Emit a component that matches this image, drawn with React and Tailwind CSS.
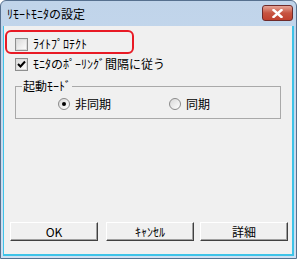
import { useState } from "react";

const font = { fontFamily: '"Noto Sans CJK JP", "Liberation Sans", sans-serif' };

const CheckBox = ({ checked, label }) => (
    <label className="flex items-center gap-[5px] h-[16px]">
        <span className="w-[13px] h-[13px] border border-[#8e8f8f] bg-white flex items-center justify-center">
            <span className="w-[11px] h-[11px] border border-[#dcdcdc] bg-gradient-to-br from-[#dcdcdc] to-[#fbfbfb] flex items-center justify-center">
                {checked && (
                    <svg width="9" height="9" viewBox="0 0 9 9">
                        <path d="M1 4 L3.5 6.5 L8 1.5" stroke="#000" strokeWidth="2" fill="none" />
                    </svg>
                )}
            </span>
        </span>
        <span className="text-[12px] leading-none text-black">{label}</span>
    </label>
);

const Radio = ({ checked, label }) => (
    <label className="flex items-center gap-[5px]">
        <span className="w-[12px] h-[12px] rounded-full border border-[#8a8a8a] bg-gradient-to-br from-[#d8d8d8] to-white flex items-center justify-center">
            {checked && <span className="w-[4px] h-[4px] rounded-full bg-black" />}
        </span>
        <span className="text-[12px] leading-none text-black">{label}</span>
    </label>
);

const Button = ({ children }) => (
    <button className="w-[88px] h-[19px] bg-[#f0f0f0] border border-t-white border-l-white border-r-[#404040] border-b-[#404040] shadow-[inset_-1px_-1px_0_#a0a0a0] text-[12px] leading-none text-black flex items-center justify-center">
        {children}
    </button>
);

export default function App() {
    const [mode] = useState("async");

    return (
        <div className="w-[300px] h-[262px] bg-white relative overflow-hidden" style={font}>
            <div className="w-[297px] h-[259px] flex flex-col border border-[#56708f] rounded-t-[6px] bg-gradient-to-b from-[#c0d4ea] to-[#cfe0f2] overflow-hidden">
                {/* title bar */}
                <div className="h-[25px] flex items-start justify-between pl-[6px] pr-[3px] pt-[4px]">
                    <span className="text-[12px] leading-[16px] text-black pt-[1px]">ﾘﾓｰﾄﾓﾆﾀの設定</span>
                    <div className="w-[31px] h-[16px] rounded-[3px] border border-[#6e2a2a] bg-gradient-to-b from-[#e5a497] via-[#c75441] to-[#c0402e] flex items-center justify-center">
                        <svg width="11" height="9" viewBox="0 0 11 9">
                            <path d="M1.5 1 L9.5 8 M9.5 1 L1.5 8" stroke="#ffffff" strokeWidth="2.4" strokeLinecap="square" />
                            <path d="M1.5 1 L9.5 8 M9.5 1 L1.5 8" stroke="#ffffff" strokeWidth="1.6" />
                        </svg>
                    </div>
                </div>

                {/* client area */}
                <div className="flex-1 mx-[2px] mb-[2px] bg-[#f0f0f0] border-b-2 border-l border-r-2 border-[#3ec3e8] relative flex flex-col">
                    <div className="flex flex-col gap-[4px] pl-[11px] pt-[10px]">
                        <CheckBox checked={false} label="ﾗｲﾄﾌﾟﾛﾃｸﾄ" />
                        <CheckBox checked={true} label="ﾓﾆﾀのﾎﾟｰﾘﾝｸﾞ間隔に従う" />
                    </div>

                    {/* annotation */}
                    <div className="absolute left-[1px] top-[4px] w-[129px] h-[24px] border-2 border-[#e81a25] rounded-[6px]" />

                    {/* group box */}
                    <div className="mt-[14px] ml-[11px] mr-[11px] h-[33px] border border-[#a9a9a9] relative flex items-center gap-[58px] pl-[42px] pt-[3px]">
                        <span className="absolute -top-[8px] left-[6px] px-[1px] bg-[#f0f0f0] text-[12px] leading-[14px] text-black">起動ﾓｰﾄﾞ</span>
                        <Radio checked={mode === "async"} label="非同期" />
                        <Radio checked={mode === "sync"} label="同期" />
                    </div>

                    <div className="mt-auto mb-[13px] flex pl-[6px]">
                        <Button>OK</Button>
                        <div className="w-[8px]" />
                        <Button>ｷｬﾝｾﾙ</Button>
                        <div className="w-[6px]" />
                        <Button>詳細</Button>
                    </div>
                </div>
            </div>
        </div>
    );
}
